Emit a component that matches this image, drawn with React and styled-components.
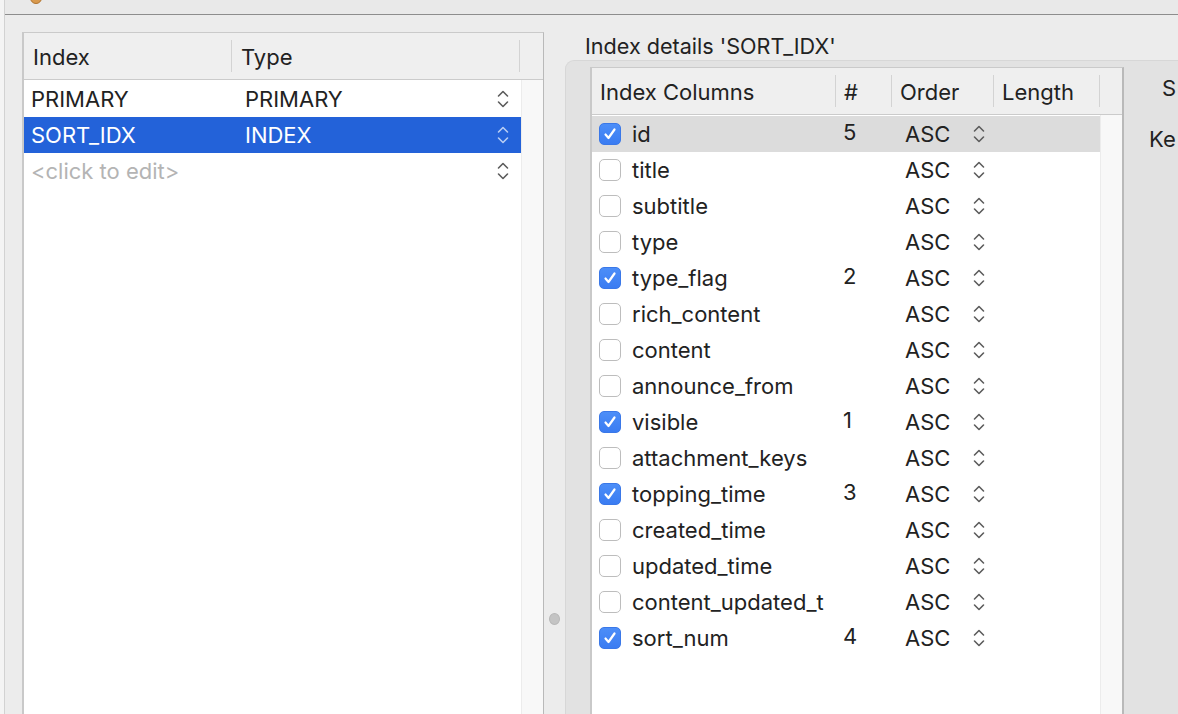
import React from 'react';
import styled, { createGlobalStyle } from 'styled-components';

const GlobalStyle = createGlobalStyle`
  html, body {
    margin: 0;
    padding: 0;
    background: #ececec;
  }
  body {
    font-family: Inter, "Liberation Sans", sans-serif;
  }
`;

const Screen = styled.div`
  width: 1178px;
  height: 714px;
  display: flex;
  overflow: hidden;
  background: #ececec;
  color: #222;
  font-size: 22px;
`;

const EdgeStrip = styled.div`
  width: 4px;
  flex-shrink: 0;
  background: #f4f4f4;
  border-right: 1px solid #d2d2d2;
`;

const Window = styled.div`
  flex: 1;
  display: flex;
  flex-direction: column;
  min-width: 0;
`;

const TopBar = styled.div`
  height: 14px;
  flex-shrink: 0;
  background: #e9e9e9;
  border-bottom: 1px solid #8d8d8d;
  padding-left: 24px;
  overflow: hidden;
`;

const Main = styled.div`
  flex: 1;
  display: flex;
  min-height: 0;
`;

const LeftPane = styled.div`
  padding: 17px 0 0 17px;
  display: flex;
  flex-shrink: 0;
`;

const Table = styled.div`
  display: flex;
  flex-direction: column;
  box-sizing: border-box;
  width: ${(p) => p.width}px;
  flex-shrink: 0;
  border-top: 1px solid #cacaca;
  border-left: 2px solid #c9c9c9;
  border-right: ${(p) => p.edge || 1}px solid #b9b9b9;
  background: #fff;
`;

const HeaderRow = styled.div`
  display: flex;
  height: 46px;
  flex-shrink: 0;
  background: #efefef;
  border-bottom: 1px solid #cbcbcb;
`;

const HeadCell = styled.div`
  width: ${(p) => p.w}px;
  flex-shrink: 0;
  display: flex;
  align-items: center;
  padding-left: ${(p) => p.pad || 8}px;
  padding-top: 2px;
  box-sizing: border-box;
  position: relative;
  white-space: nowrap;
  overflow: hidden;
  &::after {
    content: '';
    position: absolute;
    right: 0;
    top: 7px;
    bottom: 7px;
    width: 1px;
    background: ${(p) => (p.last ? 'transparent' : '#d3d3d3')};
  }
`;

const Body = styled.div`
  flex: 1;
  display: flex;
  min-height: 0;
`;

const Rows = styled.div`
  flex: 1;
  display: flex;
  flex-direction: column;
  padding-top: 1px;
`;

const Track = styled.div`
  width: ${(p) => p.w}px;
  flex-shrink: 0;
  box-sizing: border-box;
  background: #f8f8f8;
  border-left: 1px solid #ececec;
`;

const Row = styled.div`
  display: flex;
  align-items: center;
  height: 36px;
  flex-shrink: 0;
  background: ${(p) => (p.selected ? '#2362d9' : p.active ? '#dcdcdc' : 'transparent')};
  color: ${(p) => (p.selected ? '#fff' : '#222')};
`;

const Cell = styled.div`
  width: ${(p) => p.w}px;
  flex-shrink: 0;
  box-sizing: border-box;
  padding-left: ${(p) => p.pad || 0}px;
  display: flex;
  align-items: center;
  white-space: nowrap;
  overflow: hidden;
  color: ${(p) => (p.muted ? '#b4b4b4' : 'inherit')};
  margin-top: ${(p) => (p.raise ? -4 : 0)}px;
`;

const Splitter = styled.div`
  width: 21px;
  flex-shrink: 0;
  display: flex;
  justify-content: center;
  padding-top: 598px;
  box-sizing: border-box;
`;

const Knob = styled.div`
  width: 11px;
  height: 12px;
  border-radius: 50%;
  background: #c4c4c4;
  border: 1px solid #b8b8b8;
  box-sizing: border-box;
`;

const RightPane = styled.div`
  flex: 1;
  display: flex;
  flex-direction: column;
  min-width: 0;
`;

const SectionTitle = styled.div`
  height: 45px;
  flex-shrink: 0;
  padding-left: 20px;
  padding-top: 18px;
  box-sizing: border-box;
  white-space: nowrap;
  font-size: 21.6px;
`;

const GroupBox = styled.div`
  flex: 1;
  display: flex;
  background: #e2e2e2;
  border-top: 1px solid #d7d7d7;
  border-left: 1px solid #d7d7d7;
  border-top-left-radius: 9px;
  padding: 6px 0 0 24px;
  min-height: 0;
`;

const FormLabels = styled.div`
  flex: 1;
  display: flex;
  flex-direction: column;
  min-width: 0;
`;

const FormLabel = styled.div`
  height: ${(p) => p.h}px;
  display: flex;
  align-items: center;
  padding-left: ${(p) => p.indent}px;
  white-space: nowrap;
`;

const Box = styled.div`
  width: 22px;
  height: 22px;
  box-sizing: border-box;
  border-radius: 5px;
  margin-right: 11px;
  flex-shrink: 0;
  display: flex;
  align-items: center;
  justify-content: center;
  background: ${(p) => (p.checked ? 'linear-gradient(#4c8ef8, #3a7cf2)' : '#fff')};
  border: 1px solid ${(p) => (p.checked ? '#3a78e8' : '#bdbdbd')};
`;

const Spacer = styled.span`
  width: ${(p) => p.w}px;
  flex-shrink: 0;
`;

const Stepper = ({ light }) => (
  <svg width="14" height="22" viewBox="0 0 14 22">
    <path
      d="M2.5 8 L7 3.5 L11.5 8 M2.5 14 L7 18.5 L11.5 14"
      fill="none"
      stroke={light ? '#b8cdf3' : '#5c5c5c'}
      strokeWidth="1.6"
      strokeLinecap="round"
      strokeLinejoin="round"
    />
  </svg>
);

const Check = ({ checked }) => (
  <Box checked={checked}>
    {checked && (
      <svg width="16" height="16" viewBox="0 0 16 16">
        <path d="M3.5 8.5 L6.5 12 L12.5 3.5" fill="none" stroke="#fff" strokeWidth="2.2" strokeLinecap="round" strokeLinejoin="round" />
      </svg>
    )}
  </Box>
);

const indexes = [
  { name: 'PRIMARY', type: 'PRIMARY' },
  { name: 'SORT_IDX', type: 'INDEX', selected: true },
  { name: '<click to edit>', type: '', placeholder: true },
];

const columns = [
  { name: 'id', n: 5 },
  { name: 'title' },
  { name: 'subtitle' },
  { name: 'type' },
  { name: 'type_flag', n: 2 },
  { name: 'rich_content' },
  { name: 'content' },
  { name: 'announce_from' },
  { name: 'visible', n: 1 },
  { name: 'attachment_keys' },
  { name: 'topping_time', n: 3 },
  { name: 'created_time' },
  { name: 'updated_time' },
  { name: 'content_updated_t' },
  { name: 'sort_num', n: 4 },
];

const App = () => {
  return (
    <Screen>
      <GlobalStyle />
      <EdgeStrip />
      <Window>
        <TopBar>
          <svg width="14" height="14" viewBox="0 0 14 14" style={{ marginTop: -9, display: 'block' }}>
            <circle cx="7" cy="7" r="5.5" fill="#d99a4e" stroke="#b07430" strokeWidth="1" />
          </svg>
        </TopBar>
        <Main>
          <LeftPane>
            <Table width={522}>
              <HeaderRow>
                <HeadCell w={208} pad={9}>Index</HeadCell>
                <HeadCell w={288} pad={9}>Type</HeadCell>
                <HeadCell w={23} last />
              </HeaderRow>
              <Body>
                <Rows>
                  {indexes.map((ix) => (
                    <Row key={ix.name} selected={ix.selected}>
                      <Cell w={208} pad={7} muted={ix.placeholder}>{ix.name}</Cell>
                      <Cell w={264} pad={13}>{ix.type}</Cell>
                      <Cell w={25}>
                        <Stepper light={ix.selected} />
                      </Cell>
                    </Row>
                  ))}
                </Rows>
                <Track w={22} />
              </Body>
            </Table>
          </LeftPane>
          <Splitter>
            <Knob />
          </Splitter>
          <RightPane>
            <SectionTitle>Index details 'SORT_IDX'</SectionTitle>
            <GroupBox>
              <Table width={534} edge={2}>
                <HeaderRow>
                  <HeadCell w={244}>Index Columns</HeadCell>
                  <HeadCell w={56}>#</HeadCell>
                  <HeadCell w={102}>Order</HeadCell>
                  <HeadCell w={106}>Length</HeadCell>
                  <HeadCell w={22} last />
                </HeaderRow>
                <Body>
                  <Rows>
                    {columns.map((c, i) => (
                      <Row key={c.name} active={i === 0}>
                        <Cell w={244} pad={7}>
                          <Check checked={!!c.n} />
                          {c.name}
                        </Cell>
                        <Cell w={56} pad={7} raise>{c.n || ''}</Cell>
                        <Cell w={102} pad={13}>
                          ASC
                          <Spacer w={22} />
                          <Stepper />
                        </Cell>
                        <Cell w={106} />
                      </Row>
                    ))}
                  </Rows>
                  <Track w={22} />
                </Body>
              </Table>
              <FormLabels>
                <FormLabel h={42} indent={38}>S</FormLabel>
                <FormLabel h={60} indent={25}>Ke</FormLabel>
              </FormLabels>
            </GroupBox>
          </RightPane>
        </Main>
      </Window>
    </Screen>
  );
};

export default App;
